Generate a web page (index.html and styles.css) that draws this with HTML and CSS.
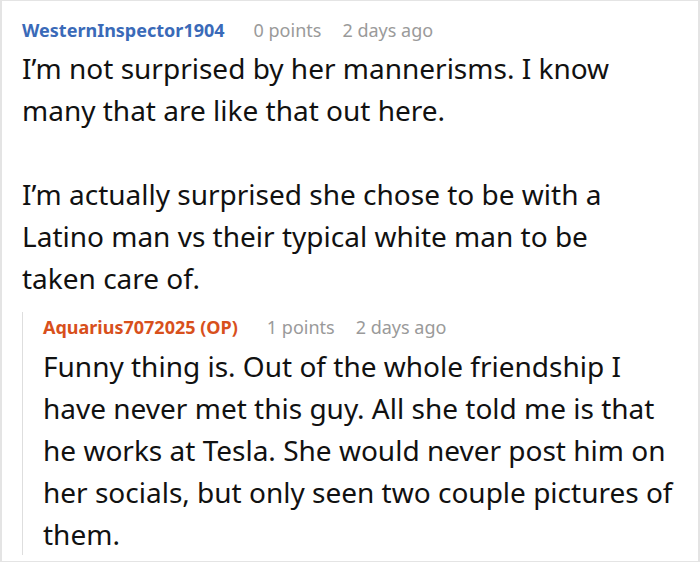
FILE: index.html
```html
<!DOCTYPE html>
<html>
<head>
<meta charset="utf-8">
<link rel="stylesheet" href="styles.css">
</head>
<body>
<div class="frame">
  <div class="comment">
    <div class="meta">
      <span class="user user-blue">WesternInspector1904</span>
      <span class="info">0 points</span>
      <span class="info">2 days ago</span>
    </div>
    <div class="text text-main">
      <p>I’m not surprised by her mannerisms. I know many that are like that out here.</p>
      <p>I’m actually surprised she chose to be with a Latino man vs their typical white man to be taken care of.</p>
    </div>
    <div class="reply">
      <div class="meta meta-reply">
        <span class="user user-orange">Aquarius7072025 (OP)</span>
        <span class="info">1 points</span>
        <span class="info">2 days ago</span>
      </div>
      <div class="text text-reply">
        <p>Funny thing is. Out of the whole friendship I have never met this guy. All she told me is that he works at Tesla. She would never post him on her socials, but only seen two couple pictures of them.</p>
      </div>
    </div>
  </div>
</div>
</body>
</html>
```
FILE: styles.css
```css
html, body {
  margin: 0;
  padding: 0;
  background: #fff;
}
.frame {
  box-sizing: border-box;
  width: 700px;
  height: 562px;
  border: 1px solid #e4e4e4;
  border-left-width: 2px;
  border-right-width: 2px;
  overflow: hidden;
}
.comment {
  padding: 14px 20px 0 20px;
  font-family: "Noto Sans", "Open Sans", sans-serif;
}
.meta {
  display: flex;
  gap: 21px;
  font-size: 18px;
  line-height: 30px;
}
.user {
  font-weight: 700;
  margin-right: 8px;
}
.user-blue { color: #3a6ab8; }
.user-orange { color: #d8501c; }
.info {
  color: #9a9a9a;
}
.text {
  margin-top: 2px;
  font-size: 28px;
  line-height: 42px;
  color: #111;
}
.text-main {
  padding-right: 20px;
}
.text p {
  margin: 0 0 42px 0;
}
.text p:last-child {
  margin-bottom: 0;
}
.reply {
  margin-top: 26px;
  border-left: 1px solid #dedede;
  padding-left: 20px;
}
.meta-reply {
  margin-top: -13px;
}
.text-reply {
  margin-top: 3px;
}
.text-reply p:last-child {
  margin-bottom: -13px;
}
```
